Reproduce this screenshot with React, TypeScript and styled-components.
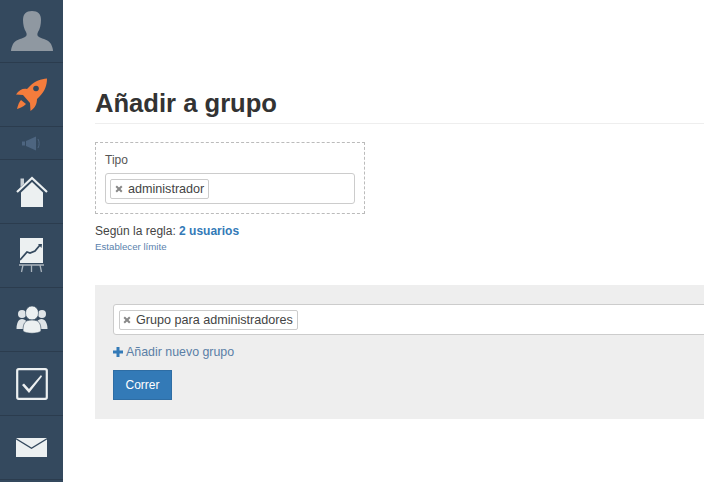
import React from 'react'
import styled, { createGlobalStyle } from 'styled-components'

const GlobalStyle = createGlobalStyle`
  html, body {
    margin: 0;
    padding: 0;
    height: 100%;
    overflow: hidden;
    background: #fff;
  }
  #root {
    height: 100%;
  }
`

const Page = styled.div`
  display: flex;
  width: 704px;
  height: 482px;
  overflow: hidden;
  font-family: 'Liberation Sans', Arial, sans-serif;
  font-size: 12px;
  color: #333;
`

const Sidebar = styled.nav`
  flex: 0 0 63px;
  display: flex;
  flex-direction: column;
  background: #34495e;
`

const SideItem = styled.div<{ $height: number }>`
  flex: 0 0 ${(p) => p.$height}px;
  box-sizing: border-box;
  display: flex;
  align-items: center;
  justify-content: center;
  border-bottom: 1px solid #2b3c4e;
`

const Main = styled.main`
  flex: 1;
  min-width: 0;
  padding: 88px 0 0 32px;
`

const Title = styled.h1`
  margin: 0;
  height: 35px;
  line-height: 31px;
  font-size: 25.6px;
  font-weight: 700;
  color: #333;
  border-bottom: 1px solid #eee;
`

const RuleBox = styled.div`
  box-sizing: border-box;
  width: 270px;
  height: 72px;
  margin-top: 18px;
  padding: 9px 9px 0;
  border: 1px dashed #bbb;
`

const FieldLabel = styled.div`
  height: 21px;
  line-height: 17px;
  color: #555;
`

const TagInput = styled.div<{ $wide?: boolean }>`
  box-sizing: border-box;
  height: 31px;
  display: flex;
  align-items: center;
  padding-left: ${(p) => (p.$wide ? 5 : 4)}px;
  background: #fff;
  border: 1px solid #ccc;
  border-radius: 3px;
  ${(p) => p.$wide && 'margin-right: -6px;'}
`

const Tag = styled.span<{ $inset?: number }>`
  box-sizing: border-box;
  height: 20px;
  display: inline-flex;
  align-items: center;
  gap: 5px;
  padding: 0 4px 0 ${(p) => p.$inset ?? 4}px;
  border: 1px solid #ccc;
  border-radius: 2px;
  color: #444;
  font-size: 12.6px;
  line-height: 18px;
`

const TagRemove = styled.svg`
  width: 8px;
  height: 8px;
  flex: none;
`

const RuleCount = styled.div`
  margin-top: 9px;
  line-height: 17px;
  color: #444;
`

const UserCount = styled.a`
  color: #337ab7;
  font-weight: 700;
`

const LimitLink = styled.a`
  display: block;
  font-size: 9.7px;
  line-height: 13px;
  color: #5a82ad;
`

const Panel = styled.section`
  height: 134px;
  box-sizing: border-box;
  margin-top: 32px;
  padding: 19px 0 0 18px;
  background: #eee;
  overflow: hidden;
`

const AddLink = styled.a`
  display: flex;
  align-items: center;
  gap: 3px;
  height: 17px;
  margin-top: 8px;
  font-size: 12.4px;
  color: #5b7fa6;
`

const PlusIcon = styled.svg`
  width: 10px;
  height: 10px;
  flex: none;
`

const RunButton = styled.button`
  display: block;
  box-sizing: border-box;
  width: 59px;
  height: 30px;
  margin-top: 10px;
  padding: 0;
  font: inherit;
  color: #fff;
  background: #337ab7;
  border: 1px solid #2e6da4;
  border-radius: 0;
`

const RemoveX = () => (
  <TagRemove viewBox="0 0 8 8">
    <path d="M1.2 1.2 L6.8 6.8 M6.8 1.2 L1.2 6.8" stroke="#888" strokeWidth="2" />
  </TagRemove>
)

const Avatar = () => (
  <svg width="42" height="40" viewBox="0 0 42 40">
    <path
      d="M21 0c6 0 9 3 9 9 0 4-1 9-3 12-1 2-1 4 1 5 4 2 10 3 12 7 1 2 2 5 2 7H0c0-2 1-5 2-7 2-4 8-5 12-7 2-1 2-3 1-5-2-3-3-8-3-12 0-6 3-9 9-9z"
      fill="#8f98a1"
    />
  </svg>
)

const Rocket = () => (
  <svg width="33" height="33" viewBox="0 0 33 33">
    <path
      d="M32 0.500C26 1 20 3 15 8L12 11C8 10 4 12 1 16.500L8 17L15 25L15.500 33C20 30 22 26 22 21L25 18C30 13 32 7 32 0.500z"
      fill="#f47c3c"
    />
    <circle cx="21" cy="10.500" r="2.800" fill="#34495e" />
    <path d="M6 22L11 26C8 29 5 30 2 31C3 27 4 24 6 22z" fill="#f47c3c" />
  </svg>
)

const Speaker = () => (
  <svg width="20" height="15" viewBox="0 0 20 15">
    <rect x="0" y="5.500" width="3" height="4" fill="#4d6580" />
    <path d="M4 5 L14 0.500 V14.500 L4 10z" fill="#4d6580" />
    <path d="M16 3c1.500 2.500 1.500 6.500 0 9" stroke="#4d6580" strokeWidth="1" fill="none" />
  </svg>
)

const Home = () => (
  <svg width="32" height="31" viewBox="0 0 32 31">
    <path d="M5 16.500 L16 6 L27 16.500 V31 H5z" fill="#ecf0f1" />
    <path d="M1 16 L16 2 L31 16" stroke="#ecf0f1" strokeWidth="2.200" fill="none" />
    <path d="M4.500 2.500 H8 V8 L4.500 11z" fill="#c9d0d5" />
  </svg>
)

const Chart = () => (
  <svg width="25" height="35" viewBox="0 0 25 35">
    <rect x="1" y="0" width="23" height="25" fill="#ecf0f1" />
    <path d="M1 22 L8 14 L11 15 L16 13 L21 7" stroke="#34495e" strokeWidth="1.800" fill="none" />
    <path d="M19 6 L23 6 L22.500 10z" fill="#34495e" />
    <path d="M0 27 H25 M4 27 L2.500 34 M12.500 27 V34 M21 27 L22.500 34" stroke="#aab4bd" strokeWidth="1.300" />
  </svg>
)

const Users = () => (
  <svg width="32" height="28" viewBox="0 0 32 28">
    <circle cx="6" cy="8" r="4" fill="#dfe4e7" />
    <circle cx="26" cy="8" r="4" fill="#dfe4e7" />
    <path d="M0.500 23c0-6 2-10 5.500-10s7 4 7 10z" fill="#dfe4e7" />
    <path d="M18.500 23c0-6 3.500-10 7-10s6 4 6 10z" fill="#dfe4e7" />
    <ellipse cx="16" cy="7" rx="6.500" ry="7" fill="#ecf0f1" stroke="#34495e" strokeWidth="0.600" />
    <path d="M7 25c0-8 2-11 9-11s9 3 9 11c-3 3-15 3-18 0z" fill="#ecf0f1" stroke="#34495e" strokeWidth="0.600" />
  </svg>
)

const Check = () => (
  <svg width="32" height="32" viewBox="0 0 32 32">
    <rect x="1.200" y="1.200" width="29.600" height="29.600" rx="1.500" fill="none" stroke="#ecf0f1" strokeWidth="2.200" />
    <path d="M6 17 L8 15.500 L13 21 L25 7 L26 8.500 L13 25z" fill="#ecf0f1" />
  </svg>
)

const Mail = () => (
  <svg width="31" height="19" viewBox="0 0 31 19">
    <path d="M0 0 H31 L15.500 9.500z" fill="#ecf0f1" />
    <path d="M0 1.500 L15.500 11 L31 1.500 V19 H0z" fill="#ecf0f1" />
  </svg>
)

const App: React.FC = () => (
  <Page>
    <GlobalStyle />
    <Sidebar>
      <SideItem $height={63}><Avatar /></SideItem>
      <SideItem $height={64}><Rocket /></SideItem>
      <SideItem $height={33}><Speaker /></SideItem>
      <SideItem $height={64}><Home /></SideItem>
      <SideItem $height={64}><Chart /></SideItem>
      <SideItem $height={64}><Users /></SideItem>
      <SideItem $height={64}><Check /></SideItem>
      <SideItem $height={64}><Mail /></SideItem>
    </Sidebar>
    <Main>
      <Title>Añadir a grupo</Title>
      <RuleBox>
        <FieldLabel>Tipo</FieldLabel>
        <TagInput>
          <Tag><RemoveX />administrador</Tag>
        </TagInput>
      </RuleBox>
      <RuleCount>
        Según la regla: <UserCount>2 usuarios</UserCount>
      </RuleCount>
      <LimitLink>Establecer límite</LimitLink>
      <Panel>
        <TagInput $wide>
          <Tag $inset={3}><RemoveX />Grupo para administradores</Tag>
        </TagInput>
        <AddLink>
          <PlusIcon viewBox="0 0 10 10">
            <path d="M5 0 V10 M0 5 H10" stroke="#337ab7" strokeWidth="3" />
          </PlusIcon>
          Añadir nuevo grupo
        </AddLink>
        <RunButton>Correr</RunButton>
      </Panel>
    </Main>
  </Page>
)

export default App
